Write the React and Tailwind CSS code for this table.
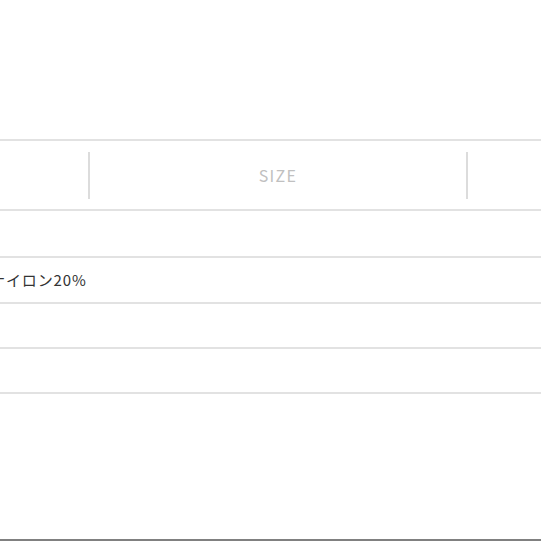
export default function App() {
  const rows = [
    { h: "h-[47px]", text: "" },
    { h: "h-[46px]", text: "ナイロン20%" },
    { h: "h-[45px]", text: "" },
    { h: "h-[45px]", text: "" },
  ];

  return (
    <div
      className="w-[541px] h-[541px] bg-white flex flex-col overflow-hidden"
      style={{ fontFamily: '"Noto Sans CJK JP", "Noto Sans", sans-serif' }}
    >
      <div className="h-[139px] shrink-0" />

      {/* header row */}
      <div className="border-t-2 border-b-2 border-[#e2e2e2] h-[72px] shrink-0 flex items-center">
        <div className="w-[88px] shrink-0" />
        <div className="w-[2px] h-[47px] bg-[#dcdcdc]" />
        <div className="flex-1 text-center text-[16px] tracking-[0.08em] text-[#c0c0c0]">SIZE</div>
        <div className="w-[2px] h-[47px] bg-[#dcdcdc]" />
        <div className="w-[73px] shrink-0" />
      </div>

      {rows.map((r, i) => (
        <div key={i} className={`${r.h} shrink-0 border-b-2 border-[#e2e2e2] flex items-center`}>
          {r.text && (
            <span className="ml-[-10px] text-[15px] tracking-[0.06em] text-[#333] whitespace-nowrap">{r.text}</span>
          )}
        </div>
      ))}

      <div className="flex-1" />
      <div className="h-[2px] bg-[#808080] shrink-0" />
    </div>
  );
}
